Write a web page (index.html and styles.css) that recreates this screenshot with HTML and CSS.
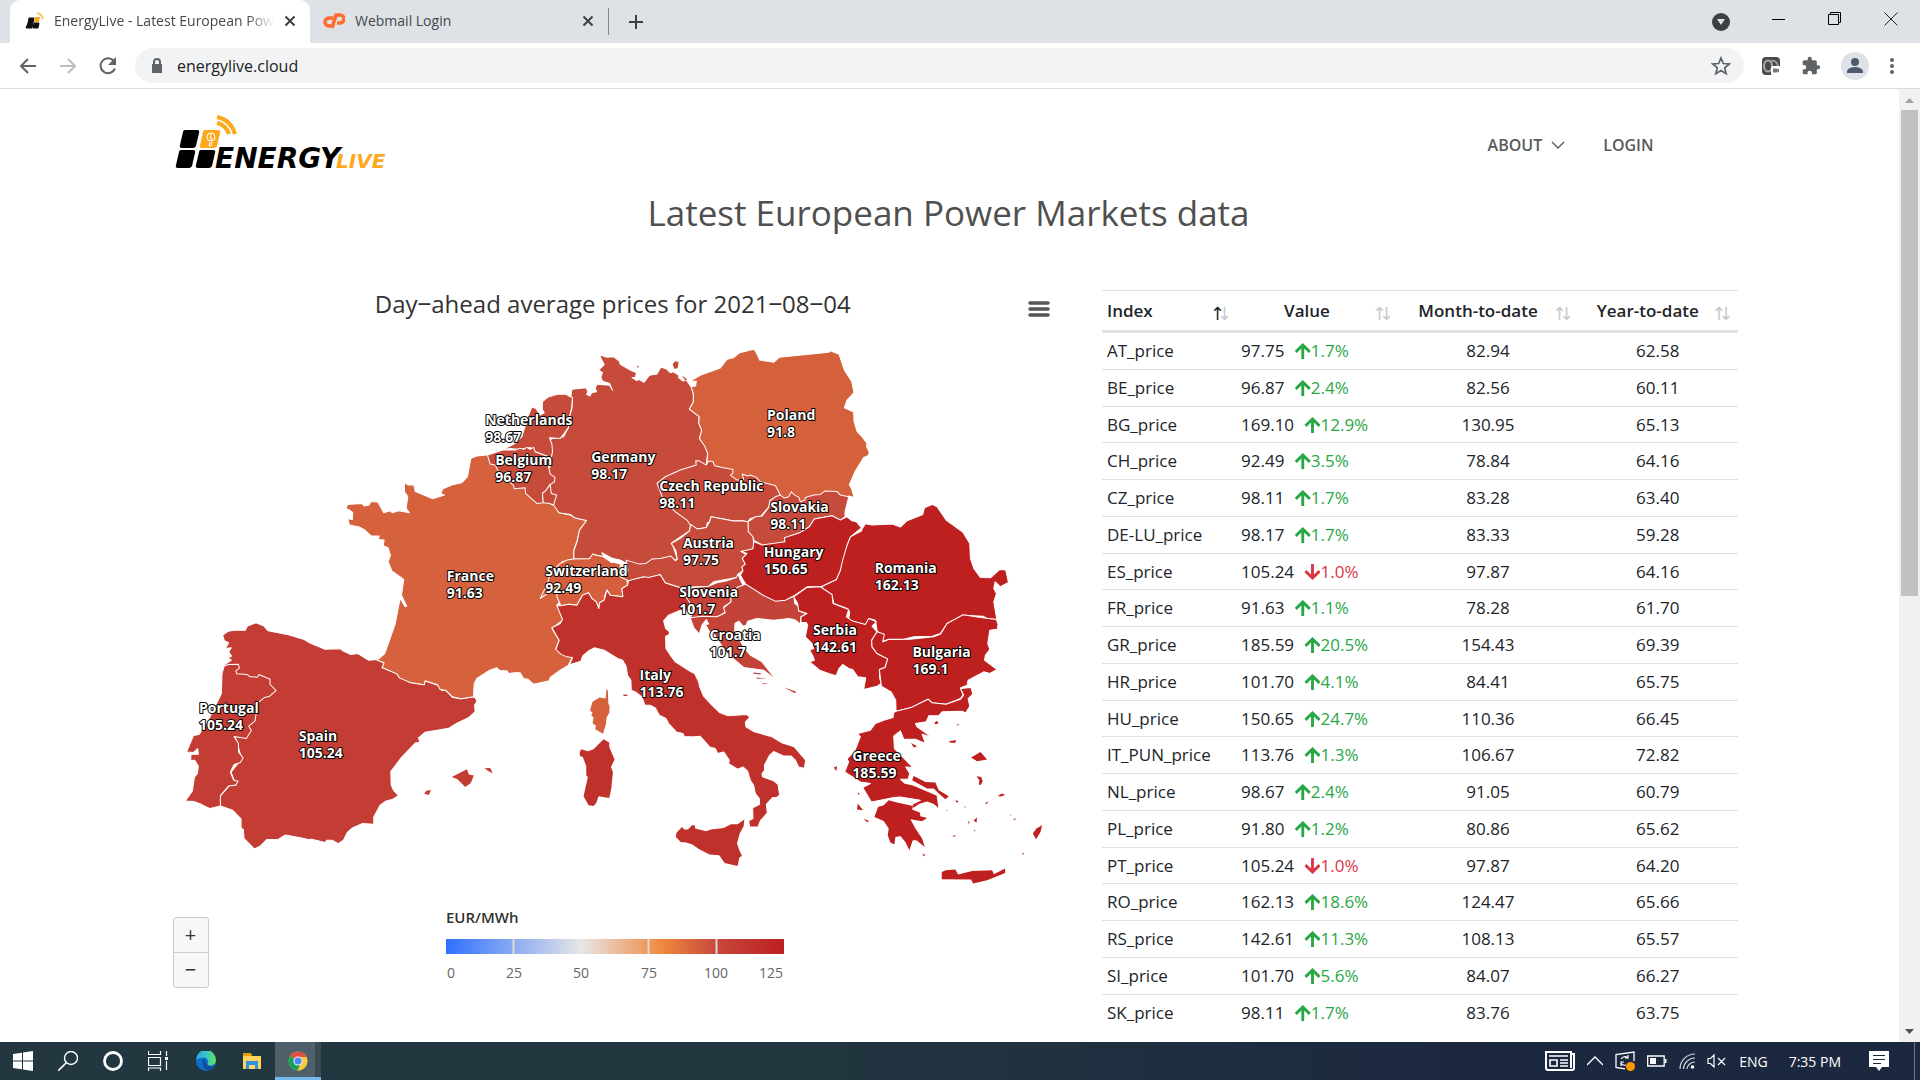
FILE: index.html
```html
<!DOCTYPE html>
<html lang="en">
<head>
<meta charset="utf-8">
<title>EnergyLive - Latest European Power Markets data</title>
<link rel="stylesheet" href="styles.css">
</head>
<body>
<div class="tabstrip">
  <div class="tab tab-active">
    <svg class="fav" width="20" height="20" viewBox="0 0 20 20"><path d="M5 7h5l-1 5H4zM4 12h5l-1 5H2zM10 12h5l-1 5H9z" fill="#111" stroke="#111"/><path d="M11 6h5l-1 5h-5z" fill="#f9a825"/><path d="M13 2q5 1 6 6" fill="none" stroke="#fbc56d" stroke-width="2"/></svg>
    <span class="tab-title fade">EnergyLive - Latest European Power</span>
    <button class="icon-btn" aria-label="Close tab"><svg width="12" height="12" viewBox="0 0 12 12"><path d="M1.500 1.500l9 9M10.500 1.500l-9 9" stroke="#3c4043" stroke-width="2"/></svg></button>
  </div>
  <div class="tab tab-second">
    <svg class="fav" width="22" height="20" viewBox="0 0 22 20"><path d="M10 7H6a4 4 0 0 0 0 8h2M9 17l4-13h4a4 4 0 0 1 0 8h-3" fill="none" stroke="#ff6c2c" stroke-width="3.600"/></svg>
    <span class="tab-title">Webmail Login</span>
    <button class="icon-btn" aria-label="Close tab"><svg width="12" height="12" viewBox="0 0 12 12"><path d="M1.500 1.500l9 9M10.500 1.500l-9 9" stroke="#3c4043" stroke-width="2"/></svg></button>
  </div>
  <button class="icon-btn new-tab" aria-label="New tab"><svg width="16" height="16" viewBox="0 0 16 16"><path d="M8 1v14M1 8h14" stroke="#3c4043" stroke-width="2"/></svg></button>
  <div class="window-controls">
    <button class="icon-btn tab-search" aria-label="Search tabs"><svg width="18" height="18" viewBox="0 0 18 18"><circle cx="9" cy="9" r="9" fill="#3c4043"/><path d="M5 6h8l-4 6z" fill="#dee1e6"/></svg></button>
    <button class="icon-btn" aria-label="Minimize"><svg width="14" height="14" viewBox="0 0 14 14"><path d="M0 7.500h13" stroke="#000"/></svg></button>
    <button class="icon-btn" aria-label="Restore"><svg width="14" height="14" viewBox="0 0 14 14"><path d="M.5 2.500h10v10H.5zM2.500 2.500v-2h10v10h-2" fill="none" stroke="#000"/></svg></button>
    <button class="icon-btn" aria-label="Close"><svg width="14" height="14" viewBox="0 0 14 14"><path d="M.5.5l13 13M13.500.5l-13 13" stroke="#222"/></svg></button>
  </div>
</div>

<div class="toolbar">
  <button class="icon-btn" aria-label="Back"><svg width="20" height="20" viewBox="0 0 20 20"><path d="M18 10H3M10 3l-7 7 7 7" fill="none" stroke="#5f6368" stroke-width="2"/></svg></button>
  <button class="icon-btn" aria-label="Forward"><svg width="20" height="20" viewBox="0 0 20 20"><path d="M2 10h15M10 3l7 7-7 7" fill="none" stroke="#bbbdbf" stroke-width="2"/></svg></button>
  <button class="icon-btn" aria-label="Reload"><svg width="20" height="20" viewBox="0 0 20 20"><path d="M17 12.500A7.500 7.500 0 1 1 15.500 4.500" fill="none" stroke="#5f6368" stroke-width="2"/><path d="M18 1v8h-8z" fill="#5f6368"/></svg></button>
  <div class="omnibox">
    <svg width="12" height="16" viewBox="0 0 12 16"><path d="M1 6h10v9H1z" fill="#5f6368"/><path d="M3 6V4a3 3 0 0 1 6 0v2" fill="none" stroke="#5f6368" stroke-width="2"/></svg>
    <input class="url" type="text" value="energylive.cloud" aria-label="Address">
    <button class="icon-btn" aria-label="Bookmark"><svg width="20" height="20" viewBox="0 0 20 20"><path d="M10 2l2.300 5.500 6 .5-4.600 3.900 1.500 5.900-5.200-3.200-5.200 3.200 1.500-5.900L1.700 8l6-.5z" fill="none" stroke="#5f6368" stroke-width="1.700"/></svg></button>
  </div>
  <div class="tools">
    <button class="icon-btn" aria-label="Recorder"><svg width="20" height="20" viewBox="0 0 20 20"><rect x="1" y="1" width="18" height="18" rx="4" fill="#4a4a4a"/><ellipse cx="7" cy="10" rx="4" ry="5.500" fill="none" stroke="#a9a9a9" stroke-width="2"/><path d="M10 5q6-1 7 5" fill="none" stroke="#999" stroke-width="2"/><rect x="10" y="10" width="10" height="10" rx="2" fill="#fff"/><path d="M12 12.500h4v1l2-1v4l-2-1v1h-4z" fill="#777"/></svg></button>
    <button class="icon-btn" aria-label="Extensions"><svg width="20" height="20" viewBox="0 0 24 24"><path d="M20.500 11H19V7a2 2 0 0 0-2-2h-4V3.500a2.500 2.500 0 0 0-5 0V5H4a2 2 0 0 0-2 2v3.800h1.500a2.700 2.700 0 0 1 0 5.400H2V20a2 2 0 0 0 2 2h3.800v-1.500a2.700 2.700 0 0 1 5.400 0V22H17a2 2 0 0 0 2-2v-4h1.500a2.500 2.500 0 0 0 0-5z" fill="#5f6368"/></svg></button>
    <button class="icon-btn" aria-label="Profile"><svg width="28" height="28" viewBox="0 0 28 28"><circle cx="14" cy="14" r="14" fill="#dee1e6"/><circle cx="14" cy="10" r="4" fill="#4d5b70"/><path d="M6 21v-2q2-4 8-4t8 4v2z" fill="#4d5b70"/></svg></button>
    <button class="icon-btn" aria-label="Menu"><svg width="6" height="18" viewBox="0 0 6 18"><g fill="#5f6368"><circle cx="3" cy="3" r="2"/><circle cx="3" cy="9" r="2"/><circle cx="3" cy="15" r="2"/></g></svg></button>
  </div>
</div>

<div class="viewport">
  <main class="page">
    <header class="site-header">
      <a href="#" class="logo" aria-label="EnergyLive home">
        <svg width="214" height="56" viewBox="0 0 214 56">
          <g fill="#000"><path d="M9 15h12q3 0 2 3l-3 13q-1 2-3 2H6q-3 0-2-3l3-13q0-2 2-2z"/><path d="M5 35h12q3 0 2 3l-3 13q-1 2-3 2H2q-3 0-2-3l3-13q0-2 2-2z"/><path d="M25 35h12q3 0 2 3l-3 13q-1 2-3 2H22q-3 0-2-3l3-13q0-2 2-2z"/></g>
          <path d="M29 15h13q3 0 2 3l-3 13q-1 2-3 2H26q-3 0-2-3l3-13q0-2 2-2z" fill="#fca91f"/>
          <circle cx="35" cy="22" r="4" fill="none" stroke="#fff"/><path d="M34 27l-1 4h2l1-4M35 19l-1 4h2l-1 3" stroke="#fff" fill="none"/>
          <path d="M41 8q9 2 12 11M41 2q14 3 18 17" fill="none" stroke="#fca91f" stroke-width="4"/>
          <text x="39" y="53" class="logo-energy">ENERGY</text><text x="160" y="53" class="logo-live">LIVE</text>
        </svg>
      </a>
      <nav class="nav">
        <a href="#">ABOUT <svg width="14" height="8" viewBox="0 0 14 8"><path d="M1 1l6 6 6-6" fill="none" stroke="#555" stroke-width="1.300"/></svg></a>
        <a href="#">LOGIN</a>
      </nav>
    </header>
    <h1>Latest European Power Markets data</h1>
    <div class="columns">
      <section class="chart">
        <div class="chart-head">
          <h2>Day‒ahead average prices for 2021‒08‒04</h2>
          <button class="icon-btn burger" aria-label="Chart menu"><svg width="22" height="18" viewBox="0 0 22 18"><path d="M2 3h18M2 9h18M2 15h18" stroke="#555" stroke-width="3.500" stroke-linecap="round"/></svg></button>
        </div>
        <svg class="map" viewBox="0 0 2760 1640" role="img" aria-label="Map of day-ahead prices">
          <g class="c-es" transform="translate(0 420)">
            <path d="M188 465L205 453 222 450 256 450 262 438 288 428 312 438 324 452 385 464 430 477 450 489 493 507 542 506 548 512 572 523 593 520 625 540 650 538 672 548 666 562 710 581 718 593 736 596 750 607 792 614 795 602 835 616 845 632 856 630 877 652 903 656 943 650 951 662 943 675 945 694 926 712 890 729 866 744 795 756 775 773 779 785 766 788 722 834 692 874 693 914 700 930 715 946 696 958 678 962 660 975 641 1010 641 1032 606 1030 575 1044 562 1056 550 1080 534 1090 516 1080 500 1080 495 1087 455 1077 443 1078 425 1073 376 1064 355 1077 320 1078 300 1098 283 1106 252 1075 250 1048 243 1043 243 1016 218 990 181 977 181 947 208 916 228 914 213 876 245 835 225 768 190 600 192 555 214 540 204 533 215 528 206 515 214 503 196 505 206 488 193 482Z"/>
            <path d="M192 558L205 553 235 552 238 564 227 572 230 581 262 583 270 590 292 591 297 583 330 597 330 613 348 631 327 649 313 652 293 668 285 722 266 738 274 751 259 775 222 769 235 790 236 816 249 833 241 847 222 853 211 876 221 900 234 903 227 914 206 917 181 946 181 977 150 985 125 973 102 964 76 962 97 932 103 892 112 880 115 858 104 840 92 841 93 822 115 822 113 805 100 817 80 815 100 767 118 762 150 710 165 680 184 640 186 580Z"/>
            <path class="isle" d="M875 890L920 867 926 883 941 886 932 908 915 920 892 897ZM973 864L990 863 998 879 985 873ZM792 940L800 931 813 930 805 944Z"/>
          </g>
          <g class="c-fr" transform="translate(0 420)">
            <path d="M651 540L674 520 705 432 720 355 735 380 740 378 724 345 731 298 695 272 684 245 691 226 684 203 669 197 672 180 655 178 657 168 634 168 613 149 595 140 568 135 563 116 577 118 578 97 568 90 558 86 562 73 605 70 613 78 627 75 632 64 653 66 671 98 690 92 697 98 715 92 748 98 738 85 743 50 733 35 733 8 745 15 761 14 765 34 786 43 818 56 853 45 842 40 848 26 875 15 905 8 922 -10 932 -65 950 -72 985 -76 1100 20 1170 70 1186 77 1196 98 1230 105 1245 113 1279 121 1258 150 1251 181 1241 210 1241 237 1205 245 1230 262 1200 290 1230 330 1190 375 1200 390 1208 420 1175 445 1197 480 1187 505 1205 520 1238 527 1224 556 1200 570 1170 592 1167 602 1120 612 1103 597 1090 595 1080 578 1062 578 1046 580 1040 572 1020 572 1010 563 985 572 950 595 942 610 940 650 903 656 877 650 856 630 840 628 832 614 795 602 792 614 750 607 718 593 710 581 666 562 672 548Z"/>
            <path class="isle" d="M1339 627L1343 630 1344 668 1348 680 1347 698 1339 712 1337 732 1328 761 1305 747 1307 736 1297 730 1300 712 1293 705 1297 698 1289 690 1297 665 1318 652 1336 655Z"/>
          </g>
          <g class="c-pl" transform="translate(1560 0)">
            <path d="M30 123L60 106 120 84 140 58 160 53 178 38 221 28 230 42 238 60 262 64 280 67 297 52 445 37 450 32 476 43 492 90 514 124 521 158 500 180 492 203 520 216 521 245 530 274 545 290 560 310 558 318 567 338 563 347 550 352 525 393 507 434 514 447 521 472 505 468 440 500 300 490 200 450 80 400 78 372 82 345 77 330 66 318 57 295 64 270 55 250 56 230 27 207 39 185 39 162 32 140 46 138 48 124Z"/>
          </g>
          <g class="c-de" transform="translate(900 0)">
            <path d="M417 44L440 52 460 50 478 64 480 73 510 90 529 98 525 112 515 113 530 122 535 118 551 127 567 106 590 102 602 81 620 88 630 98 638 95 655 105 655 113 668 123 678 120 692 140 699 162 699 185 687 207 716 230 715 250 724 270 717 295 733 318 742 340 738 372 760 420 700 560 690 560 688 572 635 608 652 660 600 655 560 675 500 670 480 660 430 650 400 643 388 656 341 657 341 632 351 603 358 570 379 541 345 534 330 523 296 518 280 495 265 470 250 400 270 380 275 340 265 300 280 295 310 290 325 262 325 240 335 205 337 175 332 168 335 148 378 143 383 155 379 163 389 168 394 158 409 155 405 145 410 133 448 136 457 151 448 130 427 124 422 112 427 98 415 90 432 74Z"/>
            <path class="isle" d="M637 72L645 64 655 66 652 85 642 86ZM664 106L680 118 675 122ZM530 76L536 80 532 84Z"/>
            <path d="M337 172L334 205 325 240 325 262 310 283 300 295 268 293 275 312 277 335 270 365 265 350 225 335 210 322 180 328 150 325 130 328 165 310 185 290 205 225 215 201 227 205 240 225 252 218 246 208 247 185 262 172 292 163 318 163 330 170Z"/>
            <path d="M82 345L128 330 165 330 180 325 190 328 200 322 210 328 220 322 225 335 265 350 272 355 265 380 270 402 284 412 283 425 270 433 258 450 247 460 249 488 230 490 196 460 195 443 162 446 160 436 118 400 105 375 90 372Z"/>
            <path d="M270 433L273 460 289 465 280 495 268 490 249 488 247 460 258 450Z"/>
            <path d="M590 430L615 410 660 390 708 375 706 362 718 363 738 375 744 363 758 364 763 377 790 383 818 388 817 400 810 405 830 420 850 418 846 402 862 408 870 405 888 412 900 425 945 436 960 465 930 480 926 500 900 530 870 535 863 545 845 542 820 543 752 530 748 545 741 548 738 562 722 565 712 567 690 555 680 540 645 515 610 480Z"/>
            <path d="M863 545L885 530 905 528 925 502 928 483 945 470 960 465 972 474 985 470 993 455 1003 465 1016 472 1020 485 1034 480 1035 472 1060 465 1080 463 1093 453 1130 454 1140 465 1165 470 1154 515 1154 530 1140 540 1115 527 1062 537 1047 560 1020 577 972 595 974 605 920 622 882 602 876 590 864 575Z"/>
          </g>
          <g class="c-ch" transform="translate(900 0)">
            <path d="M341 657L388 656 398 641 405 645 430 650 455 665 480 672 480 700 500 718 502 735 485 745 488 770 450 765 440 750 434 765 432 780 418 788 416 805 408 785 395 775 385 758 367 765 350 795 326 792 302 797 290 770 290 740 240 775 262 730 270 700 300 670 320 660Z"/>
          </g>
          <g class="c-it" transform="translate(1140 720)">
            <path d="M50 77L62 77 86 72 110 75 127 45 145 38 155 55 168 65 176 85 178 68 192 60 200 30 210 45 248 50 245 25 262 15 265 0 310 -10 360 -17 375 8 420 22 450 50 455 95 420 90 385 105 370 122 376 145 388 155 385 165 376 168 377 205 395 232 405 245 452 275 463 280 475 305 478 320 490 348 512 372 538 397 563 407 620 403 628 412 615 426 617 440 640 454 695 470 725 488 762 500 796 540 792 564 775 560 765 540 752 527 730 527 700 514 688 525 672 555 673 570 665 580 667 590 700 602 713 612 718 645 710 651 697 652 678 672 681 698 660 722 653 740 628 740 625 722 638 715 637 683 658 672 657 655 645 640 640 615 630 600 622 573 608 560 592 567 565 550 567 540 550 515 532 520 525 505 508 500 480 468 455 470 433 470 428 460 408 455 385 430 377 415 357 405 345 383 330 375 314 375 305 350 285 335 273 330 272 300 262 285 257 257 247 240 232 235 192 210 162 203 145 212 127 228 122 243 88 254 97 232 80 230 62 222 47 208 57 180 35 143 60 130 67 118Z"/>
            <path class="isle" d="M408 758L425 740 432 748 443 748 455 735 463 735 465 745 497 753 512 748 550 743 572 732 592 732 612 718 610 738 598 760 590 790 598 812 605 827 597 832 592 857 553 848 537 825 508 823 478 808 455 792 435 786 422 786 407 770ZM118 517L123 507 143 513 160 507 190 477 207 487 207 500 223 538 212 560 218 575 213 625 207 653 175 648 168 668 160 677 145 675 130 648 143 590 138 585 138 558 128 530 120 528ZM248 343L262 344 260 348 250 347Z"/>
          </g>
          <g class="c-de" transform="translate(900 0)">
            <path d="M691 553L712 567 738 562 748 545 752 530 820 543 845 542 863 545 864 575 878 590 880 612 878 628 842 634 860 645 846 655 855 672 845 680 848 692 833 702 840 710 760 725 745 738 660 742 615 728 600 703 565 712 550 710 504 722 480 710 500 700 503 690 498 660 537 672 557 670 575 657 600 655 632 648 645 662 651 658 647 632 633 610 660 595 672 585 688 572Z"/>
          </g>
          <path d="M1325 638L1362 658 1355 668 1330 650Z" fill="#fff"/>
          <g class="c-hr" transform="translate(900 0)">
            <path d="M690 790L665 752 700 742 745 738 770 728 800 722 828 712 833 702 840 720 848 735 832 742 825 755 812 765 812 785 790 800 795 815 775 830 720 835 690 832 700 815Z"/>
            <path d="M690 833L725 828 770 830 795 818 790 803 812 785 812 765 830 742 848 735 856 732 885 750 908 765 945 782 975 780 1001 768 1003 790 1016 800 1016 813 1040 822 1022 830 1020 852 1008 842 1000 838 985 835 940 840 890 835 862 843 858 855 848 858 836 843 824 850 823 875 850 920 870 945 905 965 948 1020 910 990 850 982 800 940 760 880 738 838 725 855 717 882 700 862Z"/>
            <path class="isle" d="M878 997L902 999 900 1003 880 1001ZM888 1012L918 1015 890 1016ZM906 1029L925 1030 908 1032ZM970 1041L1008 1055 1004 1059ZM738 855L752 850 758 878 748 872Z"/>
          </g>
          <g class="c-ro" transform="translate(1560 0)">
            <path d="M546 565L555 551 575 555 635 552 660 561 680 542 727 523 732 503 755 493 770 500 797 540 848 577 868 610 870 655 880 685 900 712 930 713 958 688 976 690 984 727 960 740 944 725 940 745 948 760 940 785 949 838 920 835 908 828 850 825 800 850 780 880 755 888 700 890 670 897 625 897 608 903 590 870 585 840 565 835 555 855 520 845 505 838 508 815 500 805 460 790 455 765 422 740 468 718 480 690 485 650 500 615 510 590 543 573Z"/>
            <path d="M220 604L245 615 314 605 312 593 360 577 387 560 402 537 455 527 480 540 500 530 515 542 528 545 543 563 510 590 500 615 487 660 480 690 468 718 422 740 380 740 341 767 315 780 285 783 248 765 225 750 196 732 180 705 188 692 185 680 195 672 186 655 200 640 182 634 218 626Z"/>
          </g>
          <g class="c-ro" transform="translate(1860 720)">
            <path d="M40 50L80 22 120 20 155 43 158 70 205 88 198 110 215 122 255 133 265 115 288 125 275 138 290 155 274 180 275 200 290 220 322 236 314 262 297 268 298 295 303 310 290 318 250 328 256 293 232 290 217 268 205 265 187 253 176 265 167 287 145 280 118 270 88 245 102 240 98 228 88 210 100 205 95 190 75 170 82 135 78 127 62 128 62 110 80 100 55 92 52 70Z"/>
            <path d="M290 155L312 162 307 185 325 178 390 177 460 170 480 162 500 130 548 104 600 112 648 118 653 133 650 147 628 150 622 190 628 208 615 225 612 240 650 268 628 280 610 275 563 300 560 315 540 323 548 345 540 355 497 372 455 368 443 357 395 382 347 393 346 360 332 335 303 318 297 268 314 262 322 236 290 220 275 200 274 180Z"/>
            <path d="M340 397L347 393 392 382 443 357 455 368 497 372 540 357 550 345 540 325 572 322 577 342 563 355 568 378 556 398 545 393 485 395 475 407 445 407 437 425 405 430 410 440 455 472 425 462 435 490 405 477 370 477 360 452 340 468 342 505 398 562 376 560 388 580 383 597 360 597 372 608 400 615 470 645 476 687 458 672 440 665 418 672 398 685 395 672 420 660 360 650 340 652 300 660 273 665 247 622 270 610 240 605 193 575 205 545 200 535 222 515 240 470 232 460 270 450 285 430 310 420 338 412Z"/>
            <path class="isle" d="M293 680L310 675 325 660 350 667 398 677 395 688 418 697 420 708 440 713 425 723 390 717 405 745 425 775 433 800 408 780 397 780 387 810 375 785 360 767 345 770 342 793 330 787 322 765 325 745 310 722 282 710ZM400 587L435 605 465 607 475 630 505 648 495 657 475 640 460 625 440 625 395 600ZM484 875L496 870 525 868 533 883 575 872 635 870 640 882 674 865 674 878 620 900 578 910 572 898 484 897ZM785 735L780 755 767 777 757 760 768 745ZM572 532L600 515 620 538 590 543ZM588 588L602 590 607 603 600 615 595 612 597 600ZM160 562L170 558 168 572ZM232 670L248 690 230 688ZM232 636L238 640 235 645ZM250 715L266 722 260 726ZM462 428L470 422 474 430 464 432ZM392 488L410 498 400 502ZM506 483L527 479 524 488 508 487ZM528 432L537 433 532 436ZM652 647L664 640 675 644 660 649ZM614 668L624 664 618 672ZM524 660L534 662 530 668ZM580 720L590 712 588 728ZM563 723L568 725 565 731ZM516 767L528 764 520 770ZM426 820L435 824 430 828ZM686 702L694 706 690 706ZM698 718L708 713 702 720ZM725 818L731 820 727 824ZM498 689L502 690 499 693ZM551 678L558 681 553 682ZM580 750L586 751 582 754Z"/>
          </g>
          <g class="labels">
            <text x="975" y="256">Netherlands<tspan x="975" dy="51">98.67</tspan></text>
            <text x="1005" y="375">Belgium<tspan x="1005" dy="51">96.87</tspan></text>
            <text x="1293" y="365">Germany<tspan x="1293" dy="51">98.17</tspan></text>
            <text x="1820" y="240">Poland<tspan x="1820" dy="51">91.8</tspan></text>
            <text x="1497" y="453">Czech Republic<tspan x="1497" dy="51">98.11</tspan></text>
            <text x="1830" y="516">Slovakia<tspan x="1830" dy="51">98.11</tspan></text>
            <text x="1568" y="625">Austria<tspan x="1568" dy="51">97.75</tspan></text>
            <text x="1810" y="652">Hungary<tspan x="1810" dy="51">150.65</tspan></text>
            <text x="2143" y="700">Romania<tspan x="2143" dy="51">162.13</tspan></text>
            <text x="1557" y="772">Slovenia<tspan x="1557" dy="51">101.7</tspan></text>
            <text x="1155" y="708">Switzerland<tspan x="1155" dy="51">92.49</tspan></text>
            <text x="1648" y="900">Croatia<tspan x="1648" dy="51">101.7</tspan></text>
            <text x="1958" y="886">Serbia<tspan x="1958" dy="51">142.61</tspan></text>
            <text x="2256" y="952">Bulgaria<tspan x="2256" dy="51">169.1</tspan></text>
            <text x="1438" y="1020">Italy<tspan x="1438" dy="51">113.76</tspan></text>
            <text x="2076" y="1263">Greece<tspan x="2076" dy="51">185.59</tspan></text>
            <text x="860" y="723">France<tspan x="860" dy="51">91.63</tspan></text>
            <text x="416" y="1203">Spain<tspan x="416" dy="51">105.24</tspan></text>
            <text x="117" y="1117">Portugal<tspan x="117" dy="51">105.24</tspan></text>
          </g>
        </svg>
        <div class="chart-foot">
          <div class="zoom">
            <button aria-label="Zoom in">+</button>
            <button aria-label="Zoom out">−</button>
          </div>
          <svg class="legend" width="348" height="80" viewBox="0 0 348 80">
            <defs><linearGradient id="scale"><stop offset="0" stop-color="#3070ff"/><stop offset=".4" stop-color="#e6e6e6"/><stop offset=".64" stop-color="#f0883e"/><stop offset=".8" stop-color="#c6483b"/><stop offset="1" stop-color="#bd1f1f"/></linearGradient></defs>
            <text x="0" y="17" class="legend-title">EUR/MWh</text>
            <rect x="0" y="33" width="338" height="15" fill="url(#scale)"/>
            <path d="M67.500 33v15M202.500 33v15M270.500 33v15" stroke="#e6d8d4" stroke-width="2"/>
            <g class="ticks"><text x="5" y="72">0</text><text x="68" y="72">25</text><text x="135" y="72">50</text><text x="203" y="72">75</text><text x="270" y="72">100</text><text x="325" y="72">125</text></g>
          </svg>
        </div>
      </section>
      <section class="prices">
        <table>
          <thead><tr><th class="asc">Index</th><th>Value</th><th>Month-to-date</th><th>Year-to-date</th></tr></thead>
          <tbody>
            <tr><td>AT_price</td><td>97.75 <span class="up">1.7%</span></td><td>82.94</td><td>62.58</td></tr>
            <tr><td>BE_price</td><td>96.87 <span class="up">2.4%</span></td><td>82.56</td><td>60.11</td></tr>
            <tr><td>BG_price</td><td>169.10 <span class="up">12.9%</span></td><td>130.95</td><td>65.13</td></tr>
            <tr><td>CH_price</td><td>92.49 <span class="up">3.5%</span></td><td>78.84</td><td>64.16</td></tr>
            <tr><td>CZ_price</td><td>98.11 <span class="up">1.7%</span></td><td>83.28</td><td>63.40</td></tr>
            <tr><td>DE-LU_price</td><td>98.17 <span class="up">1.7%</span></td><td>83.33</td><td>59.28</td></tr>
            <tr><td>ES_price</td><td>105.24 <span class="down">1.0%</span></td><td>97.87</td><td>64.16</td></tr>
            <tr><td>FR_price</td><td>91.63 <span class="up">1.1%</span></td><td>78.28</td><td>61.70</td></tr>
            <tr><td>GR_price</td><td>185.59 <span class="up">20.5%</span></td><td>154.43</td><td>69.39</td></tr>
            <tr><td>HR_price</td><td>101.70 <span class="up">4.1%</span></td><td>84.41</td><td>65.75</td></tr>
            <tr><td>HU_price</td><td>150.65 <span class="up">24.7%</span></td><td>110.36</td><td>66.45</td></tr>
            <tr><td>IT_PUN_price</td><td>113.76 <span class="up">1.3%</span></td><td>106.67</td><td>72.82</td></tr>
            <tr><td>NL_price</td><td>98.67 <span class="up">2.4%</span></td><td>91.05</td><td>60.79</td></tr>
            <tr><td>PL_price</td><td>91.80 <span class="up">1.2%</span></td><td>80.86</td><td>65.62</td></tr>
            <tr><td>PT_price</td><td>105.24 <span class="down">1.0%</span></td><td>97.87</td><td>64.20</td></tr>
            <tr><td>RO_price</td><td>162.13 <span class="up">18.6%</span></td><td>124.47</td><td>65.66</td></tr>
            <tr><td>RS_price</td><td>142.61 <span class="up">11.3%</span></td><td>108.13</td><td>65.57</td></tr>
            <tr><td>SI_price</td><td>101.70 <span class="up">5.6%</span></td><td>84.07</td><td>66.27</td></tr>
            <tr class="last"><td>SK_price</td><td>98.11 <span class="up">1.7%</span></td><td>83.76</td><td>63.75</td></tr>
          </tbody>
        </table>
      </section>
    </div>
  </main>
  <div class="scrollbar">
    <svg width="21" height="21" viewBox="0 0 21 21"><path d="M6 14l4.500-5 4.500 5z" fill="#a3a3a3"/></svg>
    <div class="thumb"></div>
    <svg width="21" height="21" viewBox="0 0 21 21"><path d="M6 8l4.500 5L15 8z" fill="#505050"/></svg>
  </div>
</div>

<footer class="taskbar">
  <div class="system">
    <button class="task" aria-label="Start"><svg width="20" height="20" viewBox="0 0 20 20"><path d="M0 3l9-1.300V9.500H0zM10 1.500L20 0v9.500H10zM0 10.500h9v7.800L0 17zM10 10.500h10V20l-10-1.500z" fill="#fff"/></svg></button>
    <button class="task" aria-label="Search"><svg width="20" height="20" viewBox="0 0 20 20"><circle cx="13" cy="7" r="6.500" fill="none" stroke="#fff" stroke-width="1.400"/><path d="M8.500 11.500L0 20" stroke="#fff" stroke-width="1.600"/></svg></button>
    <button class="task" aria-label="Cortana"><svg width="20" height="20" viewBox="0 0 20 20"><circle cx="10" cy="10" r="8.500" fill="none" stroke="#fff" stroke-width="2.800"/></svg></button>
    <button class="task" aria-label="Task view"><svg width="20" height="20" viewBox="0 0 20 20"><path d="M.5 0v3.500h12V0M.5 6.500h12v8H.5zM.5 20v-3h12v3M18.500 0v5M18.500 10v9" fill="none" stroke="#fff" stroke-width="1.200"/><path d="M17 6h3v3h-3z" fill="#fff"/></svg></button>
  </div>
  <div class="pinned">
    <button class="task" aria-label="Edge"><svg width="20" height="20" viewBox="0 0 20 20"><defs><linearGradient id="eg"><stop offset="0" stop-color="#2aa7e8"/><stop offset=".5" stop-color="#35c6c9"/><stop offset="1" stop-color="#66e052"/></linearGradient></defs><circle cx="10" cy="10" r="10" fill="#0d6fc9"/><path d="M0 9A10 10 0 0 1 20 9c0 4-3 5.500-6 5.500-2 0-3-.8-2-2.500 1-3-2-6-5-5.500S1 8 0 9z" fill="url(#eg)"/><path d="M8 7c-3 3-2 10 3 12 3 1 6-1 8-4-3 1-8 0-9-3z" fill="#124f99"/></svg></button>
    <button class="task" aria-label="File Explorer"><svg width="20" height="18" viewBox="0 0 20 18"><path d="M1 1h8l1 2v4H1z" fill="#e0a000"/><path d="M1 4h18v13H1z" fill="#ffd45c"/><path d="M4 17V9h12v8h-3v-4H7v4z" fill="#3390dd"/></svg></button>
    <button class="task task-on" aria-label="Chrome"><svg width="20" height="20" viewBox="0 0 20 20"><circle cx="10" cy="10" r="9.500" fill="#fbc93d"/><path d="M10 10L1.800 5A9.500 9.500 0 0 1 18.500 6z" fill="#dd5144"/><path d="M10 10L1.800 5a9.500 9.500 0 0 0 7.700 14.500L13 12z" fill="#1a9f5c"/><path d="M10 6h8.500a9.500 9.500 0 0 1-9 13.500L14 12z" fill="#fbc93d"/><circle cx="10" cy="10" r="4.600" fill="#f1f1f1"/><circle cx="10" cy="10" r="3.600" fill="#4c8bf5"/></svg></button>
  </div>
  <div class="tray">
    <svg width="30" height="20" viewBox="0 0 30 20"><path d="M26 3h3v14q0 2-2 2H3q-2 0-2-2V1h25v16" fill="none" stroke="#fff" stroke-width="2"/><path d="M4 5h19M15 9h8M15 12h8M15 15h8" stroke="#fff" stroke-width="1.500"/><path d="M5 9h7v6H5z" fill="none" stroke="#fff" stroke-width="1.600"/></svg>
    <svg width="16" height="10" viewBox="0 0 16 10"><path d="M0 9l8-8 8 8" fill="none" stroke="#fff" stroke-width="1.300"/></svg>
    <svg width="20" height="20" viewBox="0 0 20 20"><path d="M19 10V1L1 3.500v13l9 1.300" fill="none" stroke="#fff" stroke-width="1.300"/><path d="M6 8q3-4 7-1v-3M13 7h-3M6 12q2 3 5 2M6 15v-4h3" fill="none" stroke="#fff" stroke-width="1.200"/><circle cx="15.500" cy="15.500" r="4.500" fill="#ff9800"/></svg>
    <svg width="20" height="12" viewBox="0 0 20 12"><path d="M.7 1h16.500v10H.7z" fill="none" stroke="#fff" stroke-width="1.300"/><path d="M18 4h1.500v4H18z" fill="#fff"/><path d="M3 3h6v6H3z" fill="#fff"/></svg>
    <svg width="16" height="16" viewBox="0 0 16 16"><g fill="none" stroke="#d5d9e0" stroke-width="1.200"><path d="M1 16A15 15 0 0 1 16 1M4.500 16A11.500 11.500 0 0 1 16 5M8 16a8 8 0 0 1 8-7"/></g><circle cx="13.500" cy="14" r="1.800" fill="#fff"/></svg>
    <svg width="20" height="14" viewBox="0 0 20 14"><path d="M1 4.500h2.500L7 1v12L3.500 9.500H1zM11 4l7 7M18 4l-7 7" fill="none" stroke="#fff" stroke-width="1.200"/></svg>
    <span class="lang">ENG</span>
    <span class="clock">7:35 PM</span>
    <svg width="20" height="20" viewBox="0 0 20 20"><path d="M0 0h20v16h-7l-3 4-3-4H0z" fill="#fff"/><path d="M4 4.500h12M4 8.500h12M4 12.500h8" stroke="#1c2740" stroke-width="1.200"/></svg>
    <span class="peek"></span>
  </div>
</footer>
</body>
</html>
```
FILE: styles.css
```css
* { box-sizing: border-box; }
body {
  margin: 0;
  height: 100vh;
  display: flex;
  flex-direction: column;
  overflow: hidden;
  background: #fff;
  color: #212529;
  font-family: "Open Sans", "Noto Sans", sans-serif;
}
button { font: inherit; }
svg { display: block; flex: none; }
.icon-btn {
  display: flex;
  align-items: center;
  justify-content: center;
  padding: 0;
  border: 0;
  background: none;
}

/* Browser chrome */
.tabstrip {
  display: flex;
  flex: none;
  height: 43px;
  padding-left: 10px;
  background: #dee1e6;
}
.tab {
  display: flex;
  align-items: center;
  width: 300px;
  padding: 0 14px 2px;
  font-size: 14px;
  color: #45494d;
}
.tab-active { background: #fff; border-radius: 10px 10px 0 0; }
.tab-second { width: 299px; margin: 8px 0; padding-left: 13px; border-right: 1px solid #85888c; }
.fav { margin-right: 10px; }
.tab-title { flex: 1; white-space: nowrap; overflow: hidden; }
.fade {
  margin-right: 10px;
  -webkit-mask-image: linear-gradient(to right, #000 88%, transparent);
  mask-image: linear-gradient(to right, #000 88%, transparent);
}
.new-tab { width: 54px; }
.window-controls {
  display: flex;
  align-items: center;
  gap: 42px;
  margin-left: auto;
  padding: 0 22px 6px 0;
}
.tab-search { padding-top: 6px; }
.toolbar {
  display: flex;
  flex: none;
  align-items: center;
  gap: 20px;
  height: 46px;
  padding: 0 25px 0 18px;
  border-bottom: 1px solid #dadce0;
}
.omnibox {
  display: flex;
  flex: 1;
  align-items: center;
  gap: 14px;
  height: 35px;
  margin: 0 -3px;
  padding: 0 13px 0 16px;
  border-radius: 18px;
  background: #f1f3f4;
}
.url {
  flex: 1;
  padding: 0;
  border: 0;
  background: none;
  font: 16px "Open Sans", sans-serif;
  color: #202124;
}
.tools { display: flex; align-items: center; gap: 20px; }

/* Site */
.viewport { display: flex; flex: 1; min-height: 0; }
.page { flex: 1; overflow: hidden; padding-right: 2px; }
.site-header, .columns { max-width: 1578px; margin: 0 auto; }
.site-header {
  display: flex;
  align-items: center;
  justify-content: space-between;
  padding: 26px 84px 0 16px;
}
.logo svg { overflow: visible; }
.logo-energy, .logo-live { font-family: "DejaVu Sans", sans-serif; font-weight: bold; font-style: oblique; }
.logo-energy { font-size: 28px; }
.logo-live { font-size: 20px; fill: #fca91f; }
.nav { display: flex; gap: 38px; padding-top: 4px; }
.nav a {
  display: flex;
  align-items: center;
  gap: 9px;
  font-size: 16px;
  font-weight: 600;
  color: #5a5a5a;
  text-decoration: none;
}
h1 {
  margin: 18px 0 53px;
  font-size: 35px;
  font-weight: 400;
  line-height: 48px;
  text-align: center;
  color: #4f4f4f;
}
.columns { display: grid; grid-template-columns: 7fr 5fr; }
.chart-head {
  display: flex;
  align-items: center;
  padding: 0 30px 0 16px;
  margin-bottom: 22px;
}
h2 {
  flex: 1;
  margin: 0 0 0 22px;
  font-size: 24px;
  font-weight: 400;
  line-height: 28px;
  text-align: center;
  color: #333;
}
.burger { align-self: flex-end; }
.map { width: 100%; }
.map path { stroke: #fff; stroke-width: 3; stroke-linejoin: round; }
.map .isle { stroke: none; }
.c-es { fill: #c33d34; }
.c-fr { fill: #d6613d; }
.c-pl { fill: #d5603c; }
.c-de { fill: #c74b3b; }
.c-ch { fill: #d55f3d; }
.c-it { fill: #c0312b; }
.c-hr { fill: #c34338; }
.c-ro { fill: #bd201f; }
.labels {
  font-size: 42px;
  font-weight: 700;
  fill: #fff;
  stroke: #000;
  stroke-width: 6px;
  stroke-linejoin: round;
  paint-order: stroke;
}
.chart-foot {
  display: grid;
  grid-template-columns: 1fr auto 1fr;
  padding: 19px 0 0 0;
}
.zoom { width: 36px; margin: 11px 0 0 13px; }
.zoom button {
  display: block;
  width: 100%;
  height: 36px;
  padding: 0;
  border: 1px solid #ccc;
  border-radius: 3px 3px 0 0;
  background: #f7f7f7;
  font-size: 20px;
  line-height: 34px;
  color: #333;
}
.zoom button + button { margin-top: -1px; border-radius: 0 0 3px 3px; }
.legend-title { font-size: 15px; font-weight: 600; fill: #333; }
.ticks { font-size: 14px; fill: #666; text-anchor: middle; }

.prices { padding-left: 22px; }
table {
  width: 100%;
  table-layout: fixed;
  border-collapse: separate;
  border-spacing: 0;
  border-top: 1px solid #dee2e6;
  font-size: 17px;
  line-height: 24px;
}
th, td { padding: 6px 5px; text-align: center; white-space: nowrap; }
th {
  position: relative;
  padding: 8px 25px 7px 5px;
  border-bottom: 3px solid #dee2e6;
  font-weight: 600;
}
th:nth-child(1) { width: 134px; text-align: left; }
th:nth-child(2) { width: 162px; }
th:nth-child(3) { width: 180px; }
th::before, th::after {
  position: absolute;
  right: 11px;
  bottom: 4px;
  font: 18px/24px "DejaVu Sans", sans-serif;
  color: #c8c9ca;
}
th::before { content: "\2191"; }
th::after { content: "\2193"; right: 4px; }
.asc::before { color: #212529; }
td { border-bottom: 1px solid #dee2e6; }
td:nth-child(1), td:nth-child(2) { text-align: left; }
tr:nth-child(4n+3) td { padding-bottom: 5px; }
.last td { border-bottom: 0; }
.up, .down { margin-left: 6px; }
.up { color: #28a745; }
.down { color: #dc3545; }
.up::before, .down::before {
  content: "";
  display: inline-block;
  width: 16px;
  height: 16px;
  vertical-align: -2px;
  background: currentColor;
  clip-path: polygon(50% 0, 100% 48%, 88% 62%, 59% 34%, 59% 100%, 41% 100%, 41% 34%, 12% 62%, 0 48%);
}
.down::before { clip-path: polygon(50% 100%, 100% 52%, 88% 38%, 59% 66%, 59% 0, 41% 0, 41% 66%, 12% 38%, 0 52%); }

.scrollbar { display: flex; flex-direction: column; justify-content: space-between; width: 21px; background: #f1f1f1; }
.thumb { height: 51%; margin: 0 2px auto; background: #c1c1c1; }

/* Taskbar */
.taskbar {
  display: flex;
  flex: none;
  height: 38px;
  background: linear-gradient(to right, #22373f 40%, #1c2740 78%);
  color: #fff;
}
.system, .pinned { display: flex; }
.pinned { margin-left: 3px; }
.task {
  display: flex;
  align-items: center;
  justify-content: center;
  width: 45px;
  padding: 0;
  border: 0;
  background: none;
}
.pinned .task { width: 46px; }
.pinned .task-on {
  padding-top: 3px;
  background: linear-gradient(to right, #4e616a 40px, #3c4951 40px);
  border-bottom: 3px solid #76b9ed;
}
.tray {
  display: flex;
  align-items: center;
  gap: 12px;
  margin-left: auto;
  padding-right: 5px;
  font-size: 14px;
}
.clock { margin: 0 16px 0 9px; }
.peek { align-self: stretch; margin-left: 13px; border-left: 1px solid #6b7384; }
```
